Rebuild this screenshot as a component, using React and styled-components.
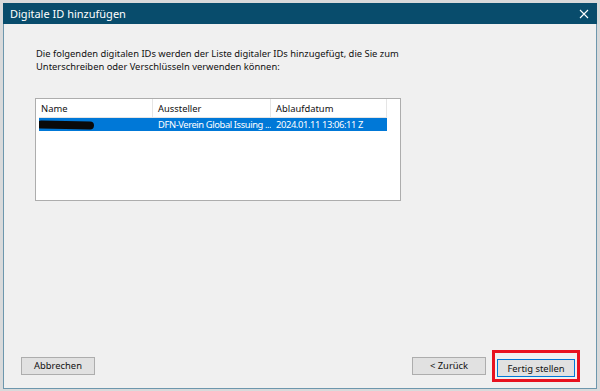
import React from "react";
import styled, { createGlobalStyle } from "styled-components";

const GlobalStyle = createGlobalStyle`
  html, body {
    margin: 0;
    padding: 0;
    background: #d9dadb;
  }
  body {
    font-family: "Noto Sans", "Open Sans", sans-serif;
  }
`;

const Screen = styled.div`
  width: 600px;
  height: 391px;
  padding: 3px;
  box-sizing: border-box;
  overflow: hidden;
`;

const Dialog = styled.div`
  display: flex;
  flex-direction: column;
  width: 594px;
  height: 386px;
  box-sizing: border-box;
  background: #f0f0f0;
  border: 1px solid #6d97ad;
  border-top: none;
`;

const TitleBar = styled.div`
  display: flex;
  align-items: center;
  justify-content: space-between;
  height: 21px;
  margin: 0 -1px;
  padding: 0 8px 0 7px;
  background: #084c6c;
  color: #fff;
  font-size: 11px;
`;

const CloseIcon = () => (
  <svg width="10" height="10" viewBox="0 0 10 10">
    <path d="M1 1 L9 9 M9 1 L1 9" stroke="#fff" strokeWidth="1.1" fill="none" />
  </svg>
);

const Body = styled.div`
  flex: 1;
  display: flex;
  flex-direction: column;
  padding: 23px 16px 6px 16px;
`;

const Intro = styled.p`
  margin: 0 0 0 16px;
  font-size: 9.4px;
  line-height: 13px;
  color: #111;
`;

const ListBox = styled.div`
  margin: 25px 0 0 15px;
  width: 366px;
  height: 103px;
  box-sizing: border-box;
  background: #fff;
  border: 1px solid #adadad;
`;

const Row = styled.div`
  display: grid;
  grid-template-columns: 114px 118px 116px;
  width: 348px;
  margin-left: 3px;
  height: ${(p) => (p.$header ? "18px" : "13px")};
  align-items: center;
  font-size: 9.4px;
  letter-spacing: ${(p) => (p.$selected ? "-0.4px" : "0")};
  color: ${(p) => (p.$selected ? "#fff" : "#111")};
  background: ${(p) => (p.$selected ? "#0078d7" : "#fff")};
  border-bottom: ${(p) => (p.$header ? "1px solid #e5e5e5" : "none")};
`;

const Cell = styled.div`
  padding-left: ${(p) => (p.$first ? "2px" : "5px")};
  white-space: nowrap;
  overflow: hidden;
  height: 100%;
  display: flex;
  align-items: center;
  border-right: ${(p) => (p.$sep ? "1px solid #e5e5e5" : "none")};
`;

const Redacted = styled.span`
  display: inline-block;
  width: 57px;
  height: 8px;
  margin-left: -4px;
  background: #0a0a0a;
  border-radius: 4px;
  transform: rotate(1deg);
`;

const Footer = styled.div`
  margin-top: auto;
  display: flex;
  align-items: center;
  padding-left: 1px;
`;

const Button = styled.button`
  width: 78px;
  height: 18px;
  box-sizing: border-box;
  font-family: "Noto Sans", sans-serif;
  font-size: 9.4px;
  color: #111;
  background: #e1e1e1;
  border: 1px solid #adadad;
  padding: 0;
  margin-left: ${(p) => p.$ml || "0"};
  ${(p) => p.$default && "border-color: #0078d7;"}
`;

const Highlight = styled.div`
  margin-left: 6px;
  padding: 2px;
  border: 3px solid #e8111f;
  background: #f0f0f0;
`;

export default function App() {
  return (
    <>
      <GlobalStyle />
      <Screen>
        <Dialog>
          <TitleBar>
            <span>Digitale ID hinzufügen</span>
            <CloseIcon />
          </TitleBar>
          <Body>
            <Intro>
              Die folgenden digitalen IDs werden der Liste digitaler IDs hinzugefügt, die Sie zum
              <br />
              Unterschreiben oder Verschlüsseln verwenden können:
            </Intro>
            <ListBox>
              <Row $header>
                <Cell $first $sep>Name</Cell>
                <Cell $sep>Aussteller</Cell>
                <Cell $sep>Ablaufdatum</Cell>
              </Row>
              <Row $selected>
                <Cell $first><Redacted /></Cell>
                <Cell>DFN-Verein Global Issuing ...</Cell>
                <Cell>2024.01.11 13:06:11 Z</Cell>
              </Row>
            </ListBox>
            <Footer>
              <Button>Abbrechen</Button>
              <Button $ml="317px">&lt; Zurück</Button>
              <Highlight>
                <Button $default>Fertig stellen</Button>
              </Highlight>
            </Footer>
          </Body>
        </Dialog>
      </Screen>
    </>
  );
}
